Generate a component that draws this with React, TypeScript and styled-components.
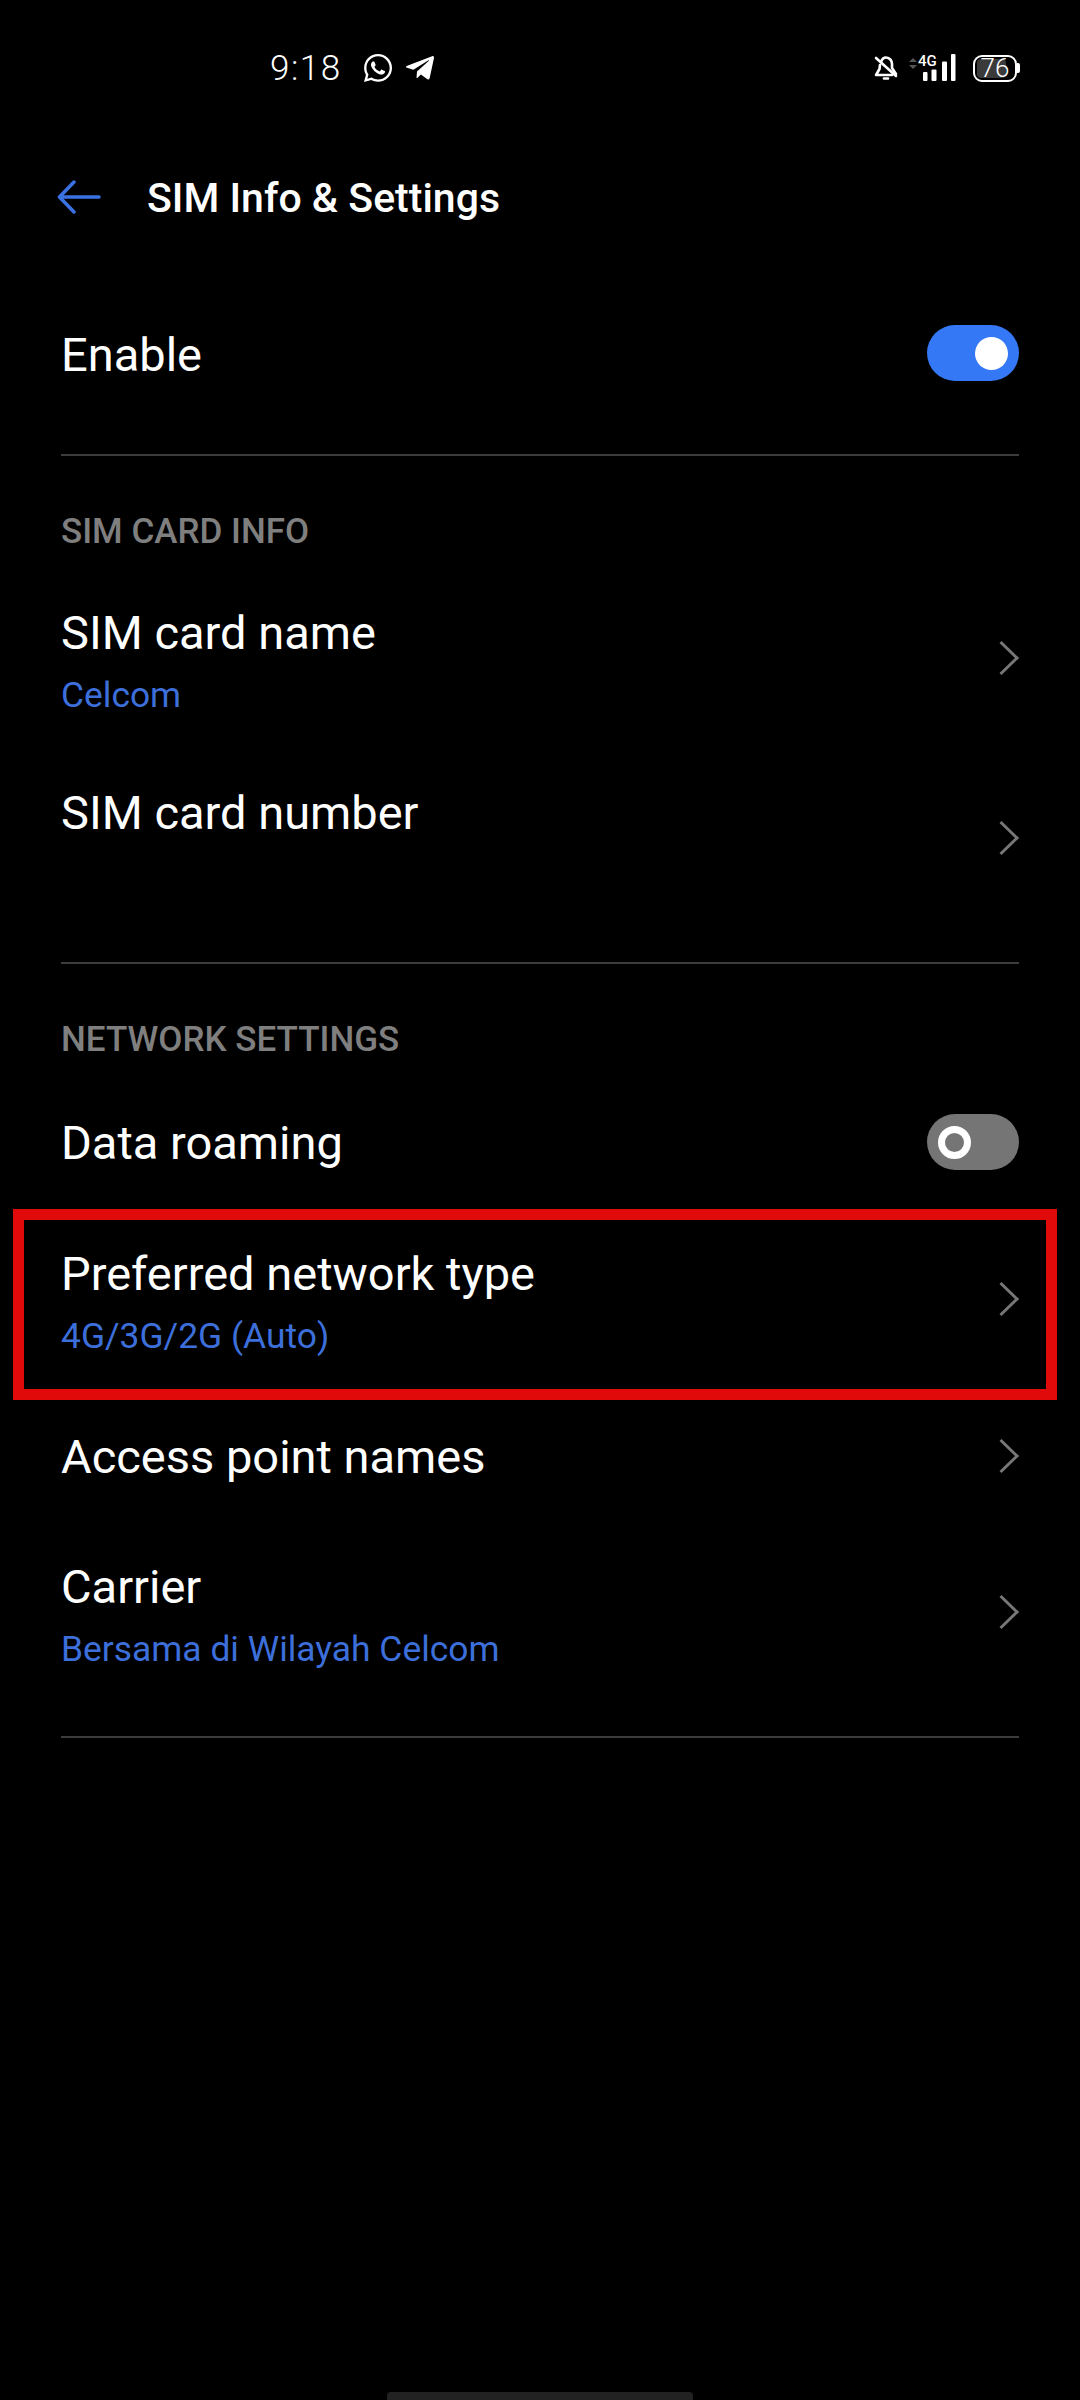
// App.tsx
import styled, { createGlobalStyle } from 'styled-components';
import { FaWhatsapp, FaTelegramPlane } from 'react-icons/fa';

const GlobalStyle = createGlobalStyle`
  html, body {
    margin: 0;
    padding: 0;
    background-color: #000000;
  }
  * {
    box-sizing: border-box;
  }
`;

const BackArrow = () => (
  <svg width="44" height="34" viewBox="0 0 44 34" fill="none" stroke="#3A72E2" strokeWidth="3.5" strokeLinecap="round" strokeLinejoin="round">
    <path d="M3 17H42M17 2L2.500 17L17 32" />
  </svg>
);

const Chevron = () => (
  <svg width="20" height="36" viewBox="0 0 20 36" fill="none" stroke="#777777" strokeWidth="3">
    <path d="M1.500 2L18 18L1.500 34" />
  </svg>
);

const BellOff = () => (
  <svg width="24" height="28" viewBox="0 0 24 28" fill="none" stroke="#FFFFFF" strokeWidth="2.600" strokeLinejoin="round" strokeLinecap="round">
    <path d="M7 8C8 5 10 3.500 12 3.500C16 3.500 18 7 18 10V14L22 20" />
    <path d="M6 11L5.500 15L2 21H18" />
    <path d="M2 4L22 22" />
    <path d="M10 24.500H14" />
  </svg>
);

const Signal = () => (
  <SignalIcon width="50" height="32" viewBox="0 -4 50 32" fill="#FFFFFF">
    <path d="M1 8L5 4L9 8ZM1 11L5 15L9 11Z" fill="#555555" />
    <text x="10" y="12" fontFamily="Roboto, sans-serif" fontSize="15" fontWeight="500" fill="#FFFFFF">4G</text>
    <rect x="15" y="18" width="4.500" height="9" rx="1" />
    <rect x="23.500" y="15.500" width="5" height="11.500" rx="1" />
    <rect x="34" y="7.500" width="5" height="19.500" rx="1" />
    <rect x="43" y="0" width="4.500" height="27" rx="1" />
  </SignalIcon>
);

const App = () => {
  return (
    <Screen>
      <GlobalStyle />
      <StatusBar>
        <StatusLeft>
          <Time>9:18</Time>
          <FaWhatsapp size={32} color="#FFFFFF" />
          <FaTelegramPlane size={32} color="#FFFFFF" />
        </StatusLeft>
        <StatusRight>
          <BellOff />
          <Signal />
          <Battery>
            <BatteryLevel />
            <BatteryText>76</BatteryText>
            <BatteryCap />
          </Battery>
        </StatusRight>
      </StatusBar>

      <Header>
        <BackArrow />
        <HeaderTitle>SIM Info &amp; Settings</HeaderTitle>
      </Header>

      <Content>
        <Row>
          <RowTitle>Enable</RowTitle>
          <Toggle $on>
            <Thumb $on />
          </Toggle>
        </Row>
        <Divider />

        <SectionLabel>SIM CARD INFO</SectionLabel>
        <Row $tall>
          <RowText>
            <RowTitle>SIM card name</RowTitle>
            <RowValue>Celcom</RowValue>
          </RowText>
          <Chevron />
        </Row>
        <Row $tall>
          <RowText>
            <RowTitle>SIM card number</RowTitle>
          </RowText>
          <Chevron />
        </Row>
        <Divider />

        <SectionLabel>NETWORK SETTINGS</SectionLabel>
        <Row>
          <RowTitle>Data roaming</RowTitle>
          <Toggle>
            <Thumb />
          </Toggle>
        </Row>
        <NetworkRow $tall>
          <RowText>
            <RowTitle>Preferred network type</RowTitle>
            <RowValue>4G/3G/2G (Auto)</RowValue>
          </RowText>
          <Chevron />
          <Highlight />
        </NetworkRow>
        <NetworkRow>
          <RowTitle>Access point names</RowTitle>
          <Chevron />
        </NetworkRow>
        <Row $tall>
          <RowText>
            <RowTitle>Carrier</RowTitle>
            <RowValue>Bersama di Wilayah Celcom</RowValue>
          </RowText>
          <Chevron />
        </Row>
        <Divider />
      </Content>

      <HomeBar />
    </Screen>
  );
};

export default App;

const Screen = styled.div`
  position: relative;
  width: 1080px;
  height: 2400px;
  overflow: hidden;
  background-color: #000000;
  color: #FFFFFF;
  font-family: Roboto, "Liberation Sans", sans-serif;
`;

const StatusBar = styled.div`
  display: flex;
  align-items: center;
  justify-content: space-between;
  height: 136px;
  padding: 0 63px 0 270px;
`;

const StatusLeft = styled.div`
  display: flex;
  align-items: center;
  gap: 10px;
`;

const Time = styled.div`
  font-size: 35px;
  font-weight: 300;
  letter-spacing: 1.5px;
  margin-right: 10px;
`;

const StatusRight = styled.div`
  display: flex;
  align-items: center;
  gap: 10px;
`;

const SignalIcon = styled.svg`
  margin-top: -4px;
`;

const Battery = styled.div`
  position: relative;
  display: flex;
  align-items: center;
  justify-content: center;
  width: 44px;
  height: 27px;
  margin-left: 5px;
  padding: 3px;
  border: 2.5px solid #FFFFFF;
  border-radius: 9px;
`;

const BatteryLevel = styled.div`
  position: absolute;
  left: 2px;
  top: 2px;
  bottom: 2px;
  width: 29px;
  background-color: #3A3A3A;
  border-radius: 4px;
`;

const BatteryText = styled.div`
  position: relative;
  font-size: 26px;
  line-height: 22px;
  font-weight: 300;
`;

const BatteryCap = styled.div`
  position: absolute;
  right: -5px;
  top: 6px;
  width: 3px;
  height: 10px;
  background-color: #FFFFFF;
  border-radius: 0 2px 2px 0;
`;

const Header = styled.div`
  display: flex;
  align-items: center;
  gap: 46px;
  height: 122px;
  padding-left: 57px;
`;

const HeaderTitle = styled.div`
  padding-top: 2px;
  font-size: 41px;
  font-weight: 500;
`;

const Content = styled.div`
  display: flex;
  flex-direction: column;
  padding: 30px 61px 0;
`;

const Row = styled.div<{ $tall?: boolean }>`
  position: relative;
  display: flex;
  align-items: center;
  justify-content: space-between;
  height: ${(props) => (props.$tall ? '180px' : '132px')};
`;

const NetworkRow = styled(Row)`
  margin-top: 1px;
`;

const RowText = styled.div`
  display: flex;
  flex-direction: column;
  align-self: flex-start;
  padding-top: 32px;
`;

const RowTitle = styled.div`
  padding-top: 2px;
  font-size: 47px;
  line-height: 62px;
  font-weight: 400;
  color: #FFFFFF;
`;

const RowValue = styled.div`
  font-size: 35.4px;
  line-height: 62px;
  color: #3D6FDB;
`;

const Divider = styled.div`
  height: 2px;
  margin-top: 34px;
  background-color: #3C3C3C;
`;

const SectionLabel = styled.div`
  display: flex;
  align-items: center;
  height: 112px;
  padding-top: 39px;
  font-size: 35px;
  font-weight: 500;
  color: #7F7F7F;
`;

const Toggle = styled.div<{ $on?: boolean }>`
  display: flex;
  align-items: center;
  justify-content: ${(props) => (props.$on ? 'flex-end' : 'flex-start')};
  width: 92px;
  height: 56px;
  margin-bottom: ${(props) => (props.$on ? '2px' : '0')};
  padding: 0 11px;
  border-radius: 28px;
  background-color: ${(props) => (props.$on ? '#3478F6' : '#757575')};
`;

const Thumb = styled.div<{ $on?: boolean }>`
  width: 33px;
  height: 33px;
  border-radius: 50%;
  background-color: ${(props) => (props.$on ? '#FFFFFF' : 'transparent')};
  border: ${(props) => (props.$on ? 'none' : '7px solid #FFFFFF')};
`;

const Highlight = styled.div`
  position: absolute;
  top: 0;
  left: -48px;
  right: -38px;
  bottom: -11px;
  border: 11px solid #E00A0A;
`;

const HomeBar = styled.div`
  position: absolute;
  left: 387px;
  bottom: 0;
  width: 306px;
  height: 8px;
  background-color: #222222;
  border-radius: 4px 4px 0 0;
`;
